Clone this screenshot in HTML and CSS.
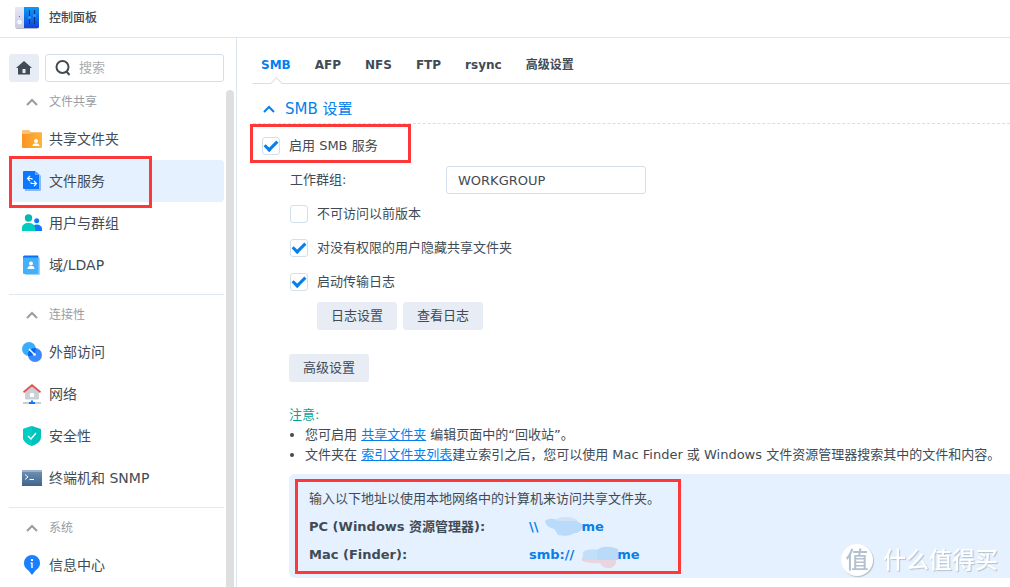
FILE: index.html
```html
<!DOCTYPE html>
<html lang="zh-CN">
<head>
  <meta charset="UTF-8">
  <title>控制面板</title>
  <link rel="stylesheet" href="styles.css">
</head>
<body>
<header class="titlebar">
  <svg class="app-icon" width="24" height="24" viewBox="0 0 24 24">
    <defs>
      <linearGradient id="gGrey" x1="0" y1="0" x2="0" y2="1"><stop offset="0" stop-color="#e6e8f6"/><stop offset="1" stop-color="#c9cce0"/></linearGradient>
      <linearGradient id="gBlue" x1="0" y1="0" x2="0" y2="1"><stop offset="0" stop-color="#0a9cf5"/><stop offset="1" stop-color="#1243dc"/></linearGradient>
    </defs>
    <rect x="1" y="20" width="22" height="3" rx="1" fill="#b9bccb"/>
    <path d="M1 1h9v21H1a1 1 0 0 1-1-1V2a1 1 0 0 1 1-1z" fill="url(#gGrey)"/>
    <path d="M9 1h14a1 1 0 0 1 1 1v19a1 1 0 0 1-1 1H9z" fill="url(#gBlue)"/>
    <circle cx="4.500" cy="10.500" r=".6" fill="#555b77"/>
    <circle cx="4.500" cy="16" r="2.800" fill="#f5f6fc" stroke="#bfc2d8" stroke-width=".5"/>
    <path d="M14.500 4v14M19.500 4v14" stroke="#0a2f75"/>
    <circle cx="14.500" cy="11.500" r="1.500" fill="#2f9bff"/>
    <circle cx="19.500" cy="9.500" r="1.500" fill="#2f9bff"/>
  </svg>
  <h1 class="title">控制面板</h1>
</header>

<div class="window">
  <aside class="sidebar">
    <div class="tools">
      <button class="home" aria-label="主页">
        <svg width="16" height="14" viewBox="0 0 16 14"><path d="M8 0L0 7h2v6.500h12V7h2zM6.500 8h3v4h-3z" fill="#414b55" fill-rule="evenodd"/></svg>
      </button>
      <label class="search">
        <svg width="16" height="16" viewBox="0 0 16 16"><g fill="none" stroke="#414b55" stroke-width="2"><circle cx="7.500" cy="7" r="6"/><path d="M11.500 11.500l3 3.500"/></g></svg>
        <input type="text" placeholder="搜索" aria-label="搜索">
      </label>
    </div>

    <div class="side-body">
      <nav class="nav">
        <section class="group">
          <button class="group-head">
            <svg class="chevron" width="12" height="8" viewBox="0 0 12 8"><path d="M1 7l5-5 5 5"/></svg>文件共享
          </button>
          <a class="item" href="#share">
            <svg width="20" height="20" viewBox="0 0 20 20">
              <path d="M0 2a1 1 0 0 1 1-1h6l2 2h10a1 1 0 0 1 1 1v8H0z" fill="#fcc27a"/>
              <linearGradient id="gFolder"><stop offset="0" stop-color="#fb9322"/><stop offset="1" stop-color="#ffb43c"/></linearGradient>
              <path d="M0 5h7l2-1h11v14a1 1 0 0 1-1 1H1a1 1 0 0 1-1-1z" fill="url(#gFolder)"/>
              <circle cx="14" cy="12" r="2" fill="#fff"/><path d="M10.500 17c0-2 1.500-2.500 3.500-2.500s3.500.5 3.500 2.500z" fill="#fff"/>
            </svg>共享文件夹
          </a>
          <a class="item active marked" href="#service">
            <svg width="20" height="20" viewBox="0 0 20 20">
              <path d="M3 1h12l4 4v14a1 1 0 0 1-1 1H3z" fill="#8cb8fb"/>
              <path d="M1 1a1 1 0 0 1 1-1h11l4 4v14H2a1 1 0 0 1-1-1z" fill="#0a78ff"/>
              <path d="M13 0l4 4h-4z" fill="#63a6ff"/>
              <path d="M8 5L5.500 7.500 8 10M5.500 7.500h4l1 1M12 10l2.500 2.500L12 15M14.500 12.500h-5l-1-1" fill="none" stroke="#fff" stroke-width="1.200"/>
            </svg>文件服务
          </a>
          <a class="item" href="#users">
            <svg width="20" height="20" viewBox="0 0 20 20">
              <circle cx="6.500" cy="5" r="3.700" fill="#00b9b4"/><circle cx="14.700" cy="7.800" r="2.500" fill="#0a78ff"/>
              <path d="M10 18v-2c0-3 2-4.500 4.700-4.500S20 13 20 16v2z" fill="#0f7bff"/>
              <path d="M0 18v-3c0-3 2.500-5 6.500-5s6.500 2 6.500 5v3z" fill="#00cdbf"/>
            </svg>用户与群组
          </a>
          <a class="item" href="#domain">
            <svg width="20" height="20" viewBox="0 0 20 20">
              <path d="M1 2a1.500 1.500 0 0 1 1.500-1.500H16L17 4H1z" fill="#0a72ee"/>
              <rect x="3" y="3" width="15" height="17" rx="1" fill="#9ed3fb"/>
              <rect x="1" y="2.500" width="15.500" height="16.500" rx="1" fill="#44affd"/>
              <circle cx="9" cy="8.500" r="2" fill="#fff"/><path d="M5.500 14c0-2.500 1.500-3 3.500-3s3.500.5 3.500 3z" fill="#fff"/>
            </svg>域/LDAP
          </a>
        </section>

        <section class="group">
          <button class="group-head">
            <svg class="chevron" width="12" height="8" viewBox="0 0 12 8"><path d="M1 7l5-5 5 5"/></svg>连接性
          </button>
          <a class="item" href="#external">
            <svg width="20" height="20" viewBox="0 0 20 20">
              <circle cx="7" cy="7" r="7" fill="#3cadfb"/><circle cx="13" cy="13" r="7" fill="#3a89ff"/>
              <path d="M13.900 6.060a7 7 0 0 1-7.840 7.840 7 7 0 0 1 7.840-7.840z" fill="#0569ee"/>
              <path d="M7 7l6 6" stroke="#fff" stroke-width="1.500"/><circle cx="12.500" cy="12.500" r="1.300" fill="#fff"/>
            </svg>外部访问
          </a>
          <a class="item" href="#network">
            <svg width="20" height="20" viewBox="0 0 20 20">
              <path d="M3 8l7-6 7 6v6.500a1 1 0 0 1-1 1H4a1 1 0 0 1-1-1z" fill="#cdd0d6"/>
              <path d="M1 7.500l9-7.500 9 7.500-1 1.500-8-6.500L2 9z" fill="#dd4f50"/>
              <rect x="8" y="9" width="4" height="4" rx=".5" fill="#fff"/>
              <path d="M1 18h18v2H1z" fill="#c8ccd3"/><path d="M9 16.500h2V18h2v2H7v-2h2z" fill="#0a78ff"/>
            </svg>网络
          </a>
          <a class="item" href="#security">
            <svg width="20" height="20" viewBox="0 0 20 20">
              <path d="M10 0l9 3v8c0 4-4 7.500-9 9-5-1.500-9-5-9-9V3z" fill="#00c2bd"/>
              <path d="M1 3l9-3v20c-5-1.500-9-5-9-9z" fill="#00cdc4"/>
              <path d="M6 10l3 3 5-6" fill="none" stroke="#fff" stroke-width="1.400"/>
            </svg>安全性
          </a>
          <a class="item" href="#terminal">
            <svg width="20" height="20" viewBox="0 0 20 20">
              <linearGradient id="gTerm" x1="0" y1="0" x2="0" y2="1"><stop offset="0" stop-color="#7293b4"/><stop offset="1" stop-color="#3f648c"/></linearGradient>
              <path d="M0 2h20v16H0z" fill="url(#gTerm)"/><path d="M0 2h20v2H0z" fill="#97b1ce"/>
              <path d="M3 6.500l3 2.500-3 2.500M7.500 11.500H12" fill="none" stroke="#fff"/>
            </svg>终端机和 SNMP
          </a>
        </section>

        <section class="group">
          <button class="group-head">
            <svg class="chevron" width="12" height="8" viewBox="0 0 12 8"><path d="M1 7l5-5 5 5"/></svg>系统
          </button>
          <a class="item" href="#info">
            <svg width="20" height="20" viewBox="0 0 20 20">
              <path d="M10 0a8 8 0 0 1 8 8c0 4-2.500 6-4.500 7.500L10 20l-3.500-4.500C4.500 14 2 12 2 8a8 8 0 0 1 8-8z" fill="#1a80ff"/>
              <path d="M9 4h2v2H9zM8.500 7.500h2.200V13H9.300V8.700h-.8z" fill="#fff"/>
            </svg>信息中心
          </a>
        </section>
      </nav>
      <div class="scrollbar"></div>
    </div>
  </aside>

  <main class="content">
    <nav class="tabs">
      <a class="tab selected" href="#smb">SMB</a>
      <a class="tab" href="#afp">AFP</a>
      <a class="tab" href="#nfs">NFS</a>
      <a class="tab" href="#ftp">FTP</a>
      <a class="tab" href="#rsync">rsync</a>
      <a class="tab" href="#advanced">高级设置</a>
    </nav>

    <h2 class="section-title">
      <svg class="chevron" width="12" height="8" viewBox="0 0 12 8"><path d="M1 7l5-5 5 5"/></svg>SMB 设置
    </h2>

    <form class="form">
      <div class="row marked">
        <input type="checkbox" id="enableSmb" checked>
        <label for="enableSmb">启用 SMB 服务</label>
      </div>
      <div class="row level1">
        <label class="field-label" for="workgroup">工作群组:</label>
        <input type="text" class="field" id="workgroup" value="WORKGROUP">
      </div>
      <div class="row level1">
        <input type="checkbox" id="hidePrev">
        <label for="hidePrev">不可访问以前版本</label>
      </div>
      <div class="row level1">
        <input type="checkbox" id="hideShare" checked>
        <label for="hideShare">对没有权限的用户隐藏共享文件夹</label>
      </div>
      <div class="row level1">
        <input type="checkbox" id="transferLog" checked>
        <label for="transferLog">启动传输日志</label>
      </div>
      <div class="row level2">
        <button type="button" class="btn">日志设置</button>
        <button type="button" class="btn">查看日志</button>
      </div>
      <div class="row level1 separate">
        <button type="button" class="btn">高级设置</button>
      </div>
    </form>

    <div class="notes">
      <p class="notes-title">注意:</p>
      <ul>
        <li>您可启用 <a href="#share">共享文件夹</a> 编辑页面中的“回收站”。</li>
        <li>文件夹在 <a href="#index">索引文件夹列表</a>建立索引之后，您可以使用 Mac Finder 或 Windows 文件资源管理器搜索其中的文件和内容。</li>
      </ul>
    </div>

    <div class="address marked">
      <p>输入以下地址以使用本地网络中的计算机来访问共享文件夹。</p>
      <dl>
        <dt>PC (Windows 资源管理器):</dt>
        <dd>\\<svg class="smudge" width="43" height="20" viewBox="0 0 43 20">
          <ellipse cx="27" cy="5" rx="12" ry="5" fill="#cfe2f6"/>
          <path d="M6 4q6-5 13 0l17 0q11 3 7 8-4 5-8 4-4 4-16 2-2-4-4-6-8-2-9-8z" fill="#b9daf8"/>
        </svg>me</dd>
        <dt>Mac (Finder):</dt>
        <dd>smb://<svg class="smudge" width="43" height="20" viewBox="0 0 43 20">
          <path d="M8 12h34v6q-2 6-9 5-6-1-7-5-10 1-18-2z" fill="#e9d5df"/>
          <path d="M9 7q5-4 16-2v10H9z" fill="#c2dff9"/><path d="M26 3q8-3 18 1v11H23V5z" fill="#b9daf8"/>
        </svg>me</dd>
      </dl>
    </div>
  </main>
</div>

<div class="watermark"><span class="stamp">值</span>什么值得买</div>
</body>
</html>
```
FILE: styles.css
```css
*, *::before, *::after {
  box-sizing: border-box;
}

body {
  margin: 0;
  height: 100vh;
  display: flex;
  flex-direction: column;
  overflow: hidden;
  background: #fff;
  color: #414b55;
  font-family: "DejaVu Sans", "Noto Sans CJK SC", sans-serif;
  font-size: 13px;
  line-height: 20px;
}

h1, h2, p, ul, dl, dd {
  margin: 0;
  padding: 0;
}

button, input {
  font: inherit;
  color: inherit;
}

button {
  border: 0;
  cursor: pointer;
}

a {
  color: #057feb;
}

svg {
  flex: none;
}

.titlebar {
  display: flex;
  align-items: center;
  gap: 10px;
  flex: none;
  height: 38px;
  padding: 0 15px 2px;
  border-bottom: 1px solid #dde5ed;
}

.title {
  font-size: 12px;
  font-weight: 500;
}

.window {
  display: flex;
  flex: 1;
  min-height: 0;
}

/* sidebar */
.sidebar {
  display: flex;
  flex-direction: column;
  flex: none;
  width: 237px;
  padding: 16px 2px 0 9px;
  border-right: 1px solid #dde5ed;
}

.tools {
  display: flex;
  flex: none;
  gap: 6px;
  height: 28px;
  margin-right: 10px;
}

.home {
  display: flex;
  align-items: center;
  justify-content: center;
  flex: none;
  width: 30px;
  padding: 0;
  border-radius: 3px;
  background: #e8edf5;
}

.search {
  display: flex;
  align-items: center;
  flex: 1;
  gap: 8px;
  min-width: 0;
  padding: 0 9px;
  border: 1px solid #d3dfea;
  border-radius: 3px;
}

.search input {
  flex: 1;
  min-width: 0;
  padding: 0;
  border: 0;
  outline: 0;
}

.search input::placeholder {
  color: #a9adb2;
}

.side-body {
  display: flex;
  flex: 1;
  gap: 2px;
  min-height: 0;
}

.nav {
  flex: 1;
}

.scrollbar {
  width: 8px;
  margin-top: 8px;
  border-radius: 4px 4px 0 0;
  background: #dfdfdf;
}

.group {
  padding: 2px 0 8px;
}

.group + .group {
  border-top: 1px solid #e1e9f0;
}

.group-head {
  display: flex;
  align-items: center;
  gap: 11px;
  width: 100%;
  height: 34px;
  padding: 2px 17px 0;
  background: none;
  color: #989da3;
  font-size: 12px;
}

.chevron {
  fill: none;
  stroke: currentColor;
  stroke-width: 2;
}

.item {
  display: flex;
  align-items: center;
  gap: 7px;
  height: 42px;
  padding: 0 13px;
  border-radius: 4px;
  color: #414b55;
  font-size: 14px;
  text-decoration: none;
}

.item.active {
  background: #e5f1fe;
}

/* red highlight frames */
.marked {
  position: relative;
}

.marked::after {
  content: "";
  position: absolute;
  border: 3px solid #fd3838;
  pointer-events: none;
}

.item.marked::after {
  inset: -4px 72px -6px 0;
}

.row.marked::after {
  top: -5px;
  left: -3px;
  width: 161px;
  height: 39px;
}

.address.marked::after {
  top: 5px;
  left: 6px;
  width: 386px;
  height: 95px;
}

/* content */
.content {
  flex: 1;
  min-width: 0;
  padding-left: 16px;
}

.tabs {
  display: flex;
  gap: 24px;
  height: 46px;
  padding-left: 8px;
  border-bottom: 1px solid #d3dfea;
}

.tab {
  position: relative;
  padding-top: 17px;
  color: #414b55;
  font-size: 12px;
  font-weight: bold;
  text-decoration: none;
}

.tab.selected {
  color: #057feb;
}

.tab.selected::after {
  content: "";
  position: absolute;
  left: 50%;
  bottom: -5px;
  width: 9px;
  height: 9px;
  margin-left: -4px;
  border: solid #d3dfea;
  border-width: 1px 0 0 1px;
  background: #fff;
  transform: rotate(45deg);
}

.section-title {
  display: flex;
  align-items: center;
  gap: 10px;
  height: 40px;
  padding: 10px 10px 0;
  border-bottom: 1px dashed #d3dfea;
  color: #057feb;
  font-size: 15px;
  font-weight: normal;
}

.form {
  padding-top: 5px;
}

.row {
  display: flex;
  align-items: center;
  gap: 9px;
  height: 34px;
  padding-left: 9px;
}

.row.level1 {
  padding-left: 37px;
}

.row.level2 {
  gap: 6px;
  padding-left: 64px;
}

.row.separate {
  margin-top: 18px;
  padding-left: 36px;
}

.row input[type="checkbox"] {
  appearance: none;
  width: 18px;
  height: 18px;
  margin: 0;
  border: 1px solid #d3dfea;
  border-radius: 3px;
}

/* the tick is an L-shaped border turned by 45deg */
.row input[type="checkbox"]:checked::before {
  content: "";
  display: block;
  width: 8px;
  height: 13px;
  margin: 0 4px;
  border: solid #057feb;
  border-width: 0 3px 3px 0;
  transform: rotate(45deg);
}

.field-label {
  width: 147px;
}

.field {
  width: 200px;
  height: 28px;
  padding: 0 11px;
  border: 1px solid #d3dfea;
  border-radius: 3px;
}

.btn {
  height: 28px;
  padding: 0 14px;
  border-radius: 3px;
  background: #e8edf5;
}

.notes {
  padding: 20px 0 9px 36px;
}

.notes-title {
  color: #00a69c;
}

.notes ul {
  padding-left: 16px;
  white-space: nowrap;
}

.address {
  margin-left: 36px;
  padding: 11px 20px 9px;
  border-radius: 6px 0 0 6px;
  background: #e5f1fe;
  line-height: 28px;
}

.address dl {
  display: grid;
  grid-template-columns: 220px 1fr;
  font-weight: bold;
}

.address dd {
  display: flex;
  align-items: center;
  color: #057feb;
}

.smudge {
  overflow: visible;
}

.watermark {
  position: fixed;
  right: 12px;
  bottom: 11px;
  display: flex;
  align-items: center;
  gap: 10px;
  color: #fff;
  font-size: 23px;
  font-weight: 500;
  line-height: 32px;
  text-shadow: 1px 1px 1px #b4c0cc;
}

.stamp {
  width: 32px;
  border-radius: 50%;
  background: #fff;
  box-shadow: 1px 1px 1px #b4c0cc;
  color: #b4c2d0;
  text-align: center;
  text-shadow: none;
}
```
